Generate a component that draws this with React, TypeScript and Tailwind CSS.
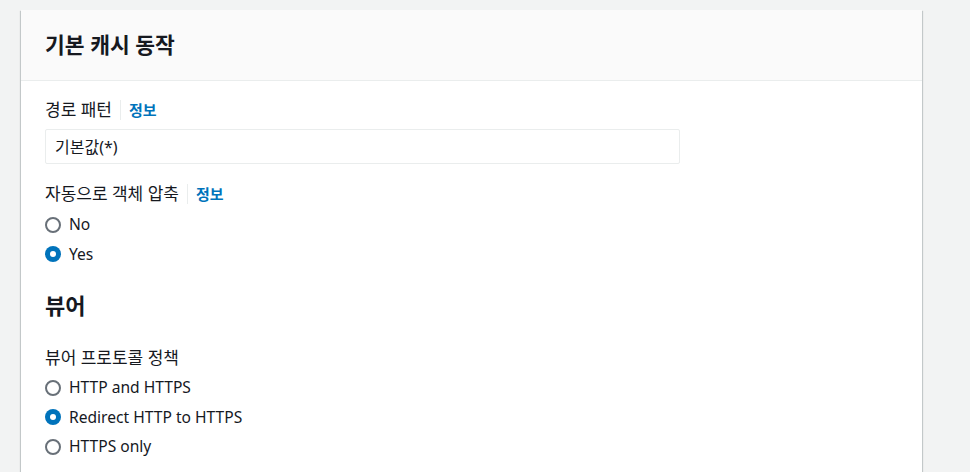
import React, { useState } from 'react';

const font = { fontFamily: '"Noto Sans", "Noto Sans CJK KR", sans-serif' };

const Radio = ({ checked, label, onClick }: { checked: boolean; label: string; onClick: () => void }) => (
  <div className="flex items-center h-[29.5px] cursor-pointer" onClick={onClick}>
    {checked ? (
      <span className="w-[16px] h-[16px] rounded-full bg-[#0073bb] flex items-center justify-center">
        <span className="w-[6px] h-[6px] rounded-full bg-white" />
      </span>
    ) : (
      <span className="w-[16px] h-[16px] rounded-full border-2 border-[#687078] bg-white" />
    )}
    <span className="ml-[8px] text-[15.6px] text-[#16191f]">{label}</span>
  </div>
);

const FieldLabel = ({ text, info }: { text: string; info?: boolean }) => (
  <div className="flex items-center h-[22px] text-[17px] text-[#16191f]">
    <span>{text}</span>
    {info && (
      <>
        <span className="mx-[8px] w-px h-[20px] bg-[#eaeded]" />
        <span className="text-[#0073bb] font-bold text-[15px]">정보</span>
      </>
    )}
  </div>
);

export default function App() {
  const [압축, set압축] = useState('yes');
  const [정책, set정책] = useState('redirect');

  return (
    <div className="min-h-[472px] bg-[#f2f3f3] pt-[10px] pl-[21px] overflow-hidden" style={font}>
      <div className="w-[901px] bg-white shadow-[0_1px_1px_0_rgba(0,28,36,0.3),1px_1px_1px_0_rgba(0,28,36,0.15),-1px_1px_1px_0_rgba(0,28,36,0.15)]">
        {/* 헤더 */}
        <div className="h-[71px] bg-[#fafafa] border-b border-[#eaeded] px-[24px] flex items-center">
          <h2 className="text-[21.5px] font-bold text-[#16191f]">기본 캐시 동작</h2>
        </div>

        {/* 본문 */}
        <div className="px-[24px] pt-[18px] pb-[20px]">
          <FieldLabel text="경로 패턴" info />
          <div className="mt-[8px] w-[635px] h-[35px] border border-[#eaeded] rounded-[2px] px-[9px] flex items-center text-[16px] text-[#16191f]">
            기본값(*)
          </div>

          <div className="mt-[19px]">
            <FieldLabel text="자동으로 객체 압축" info />
          </div>
          <div className="mt-[5px]">
            <Radio checked={압축 === 'no'} label="No" onClick={() => set압축('no')} />
            <Radio checked={압축 === 'yes'} label="Yes" onClick={() => set압축('yes')} />
          </div>

          <h2 className="mt-[22px] text-[22px] font-bold text-[#16191f] leading-[28px]">뷰어</h2>

          <div className="mt-[28px]">
            <FieldLabel text="뷰어 프로토콜 정책" />
          </div>
          <div className="mt-[4px]">
            <Radio checked={정책 === 'both'} label="HTTP and HTTPS" onClick={() => set정책('both')} />
            <Radio checked={정책 === 'redirect'} label="Redirect HTTP to HTTPS" onClick={() => set정책('redirect')} />
            <Radio checked={정책 === 'https'} label="HTTPS only" onClick={() => set정책('https')} />
          </div>
        </div>
      </div>
    </div>
  );
}
